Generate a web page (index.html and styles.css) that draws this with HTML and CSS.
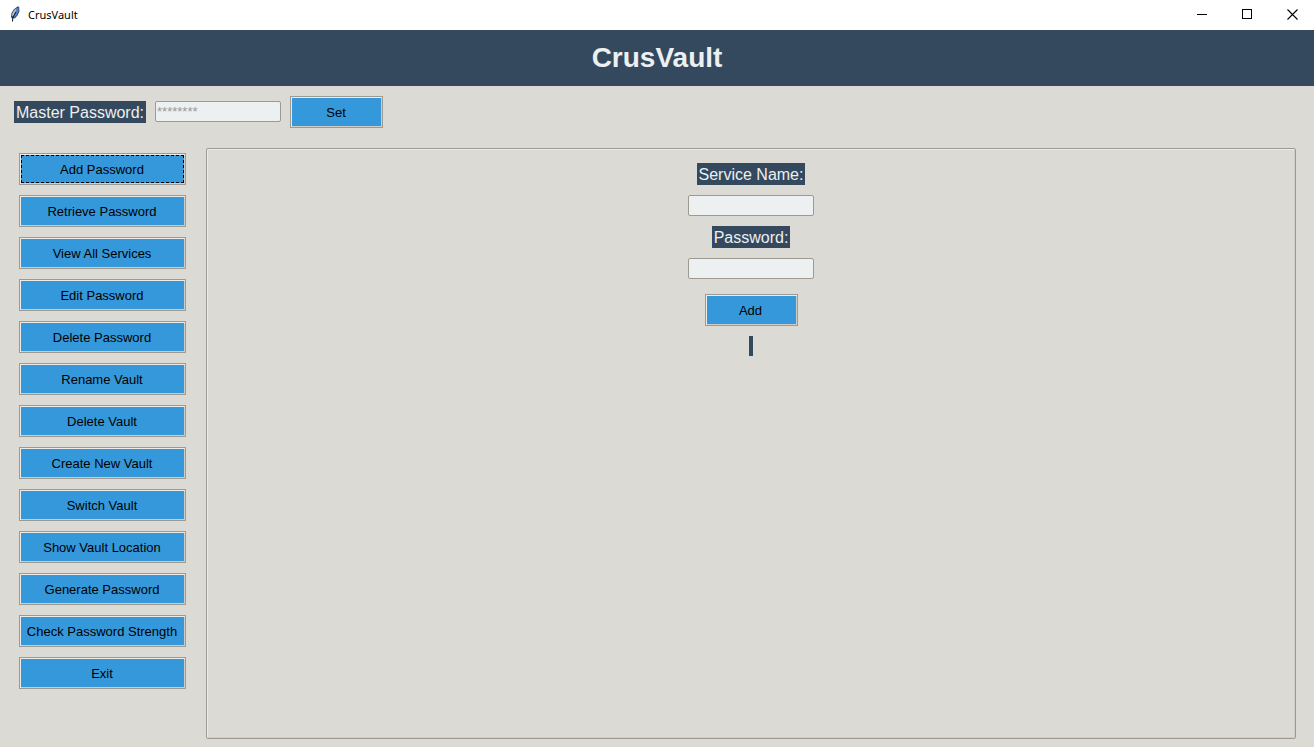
FILE: index.html
```html
<!DOCTYPE html>
<html lang="en">
<head>
<meta charset="utf-8">
<title>CrusVault</title>
<link rel="stylesheet" href="styles.css">
</head>
<body>
<div class="titlebar">
  <svg class="app-icon" width="12" height="16" viewBox="0 0 12 16" aria-hidden="true">
    <path d="M8.5 0.5 L10.2 0.8 L10.4 5.5 L8.5 9.5 L6 12.2 L3 12.6 L2 11 L2.5 7 L5 3.2 Z" fill="#3a4655"/>
    <path d="M8.8 1.6 L9.6 2.2 L9.3 5.4 L7.5 9.3 L5 11.6 L4.4 11 L7.5 4 Z" fill="#4b8be0"/>
    <path d="M7.8 2 L6.9 5 L4.2 10.5 L3 10 L3.4 7.3 L5.4 4 Z" fill="#a4c5ea"/>
    <path d="M7 6 L3.8 11.5 L3.5 15.5" fill="none" stroke="#111" stroke-width="1"/>
  </svg>
  <span class="window-name">CrusVault</span>
  <div class="window-controls">
    <button type="button" class="window-button" aria-label="Minimize"><svg width="11" height="11" viewBox="0 0 11 11"><path d="M0 5.5H10" stroke="#000"/></svg></button>
    <button type="button" class="window-button" aria-label="Maximize"><svg width="11" height="11" viewBox="0 0 11 11"><rect x="0.5" y="0.5" width="9" height="9" fill="none" stroke="#000"/></svg></button>
    <button type="button" class="window-button" aria-label="Close"><svg width="11" height="11" viewBox="0 0 11 11"><path d="M0.5 0.5L10.5 10.5M10.5 0.5L0.5 10.5" stroke="#000" stroke-width="1.1"/></svg></button>
  </div>
</div>
<header class="banner"><h1 class="banner-title">CrusVault</h1></header>
<form class="master">
  <label class="label" for="master">Master Password:</label>
  <input class="entry" id="master" type="text" value="********" disabled>
  <button type="button" class="button">Set</button>
</form>
<div class="content">
  <nav class="sidebar">
    <button type="button" class="button focused">Add Password</button>
    <button type="button" class="button">Retrieve Password</button>
    <button type="button" class="button">View All Services</button>
    <button type="button" class="button">Edit Password</button>
    <button type="button" class="button">Delete Password</button>
    <button type="button" class="button">Rename Vault</button>
    <button type="button" class="button">Delete Vault</button>
    <button type="button" class="button">Create New Vault</button>
    <button type="button" class="button">Switch Vault</button>
    <button type="button" class="button">Show Vault Location</button>
    <button type="button" class="button">Generate Password</button>
    <button type="button" class="button">Check Password Strength</button>
    <button type="button" class="button">Exit</button>
  </nav>
  <main class="panel">
    <form class="add-form">
      <label class="label" for="service">Service Name:</label>
      <input class="entry" id="service" type="text">
      <label class="label" for="password">Password:</label>
      <input class="entry" id="password" type="password">
      <button type="button" class="button submit">Add</button>
      <output class="status"></output>
    </form>
  </main>
</div>
</body>
</html>
```
FILE: styles.css
```css
* {
  box-sizing: border-box;
}

body {
  margin: 0;
  min-height: 100vh;
  display: flex;
  flex-direction: column;
  background: #dcdad5;
  font-family: "Liberation Sans", Arial, sans-serif;
}

.titlebar {
  display: flex;
  align-items: center;
  height: 30px;
  padding-left: 9px;
  background: #fff;
}

.app-icon {
  margin-bottom: 2px;
}

.window-name {
  margin-left: 7px;
  font: 11px/16px "Noto Sans", "Open Sans", sans-serif;
  color: #000;
}

.window-controls {
  display: flex;
  align-self: stretch;
  margin-left: auto;
}

.window-button {
  display: flex;
  align-items: center;
  justify-content: center;
  width: 45px;
  padding: 0 0 2px 2px;
  border: 0;
  background: none;
}

.banner {
  padding: 12px;
  background: #34495e;
  text-align: center;
}

.banner-title {
  margin: 0;
  font-size: 28px;
  line-height: 32px;
  color: #ecf0f1;
}

.master {
  display: flex;
  align-items: center;
  gap: 9px;
  padding: 10px 14px;
}

.label {
  padding: 3px 2px 1px;
  background: #34495e;
  color: #ecf0f1;
  font-size: 16px;
  line-height: 18px;
}

.entry {
  width: 126px;
  height: 21px;
  padding: 0 2px;
  border: 1px solid #9e9a91;
  border-radius: 2px;
  background: #ecf0f1;
  font: 13px/17px "Liberation Sans", Arial, sans-serif;
  color: #000;
}

.entry:disabled {
  margin-bottom: 1px;
  padding: 0 1px 1px;
  color: #999;
}

.button {
  width: 93px;
  height: 32px;
  padding: 2px 1px 0 0;
  border: 1px solid #9e9a91;
  background: #3498db;
  box-shadow: inset 1px 1px #eeebe7, inset -1px -1px #cfcdc8;
  font: 13px/18px "Liberation Sans", Arial, sans-serif;
  color: #000;
}

.content {
  flex: 1;
  display: flex;
  gap: 20px;
  padding: 10px 18px 8px 19px;
}

.sidebar {
  display: flex;
  flex-direction: column;
  gap: 10px;
  width: 167px;
  padding-top: 5px;
}

.sidebar .button {
  width: 100%;
}

.focused {
  position: relative;
}

/* keyboard focus ring drawn just inside the bevel */
.focused::before {
  content: "";
  position: absolute;
  inset: 1px;
  background:
    repeating-linear-gradient(90deg, #000 0 3px, transparent 3px 5px) top / 100% 1px no-repeat,
    repeating-linear-gradient(90deg, #000 0 3px, transparent 3px 5px) bottom / 100% 1px no-repeat,
    repeating-linear-gradient(#000 0 3px, transparent 3px 5px) left / 1px 100% no-repeat,
    repeating-linear-gradient(#000 0 3px, transparent 3px 5px) right / 1px 100% no-repeat;
}

.panel {
  flex: 1;
  padding: 14px;
  border: 1px solid #9e9a91;
  border-radius: 2px;
  box-shadow: inset 1px 1px #eeebe7, inset -1px -1px #cfcdc8;
}

.add-form {
  display: flex;
  flex-direction: column;
  align-items: center;
  gap: 10px;
}

.submit {
  margin-top: 5px;
}

.status {
  width: 4px;
  height: 20px;
  background: #34495e;
}
```
